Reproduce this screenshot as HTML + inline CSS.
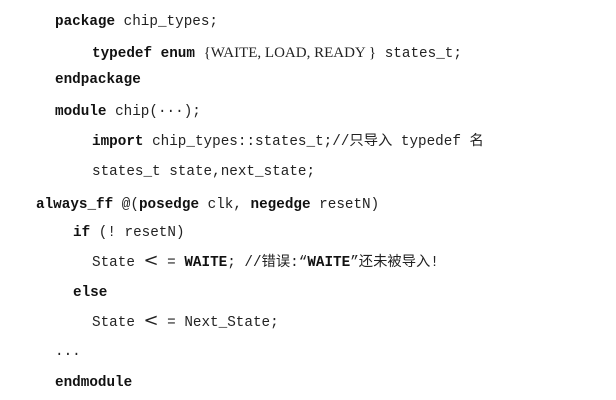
<!DOCTYPE html>
<html><head><meta charset="utf-8"><style>
body{margin:0;width:616px;height:400px;background:#fff;overflow:hidden;position:relative;font-family:"Liberation Mono","Noto Sans CJK SC",monospace;font-size:14.3px;color:#222;}
div{position:absolute;white-space:pre;line-height:18px;}
b{font-weight:bold;color:#111}
.s{font-family:"Liberation Serif","Noto Serif CJK SC",serif;font-size:15px}
.l{font-family:"DejaVu Sans",sans-serif;font-size:18px;line-height:14px}
</style></head><body>
<div style="left:55px;top:13px"><b>package</b> chip_types;</div>
<div style="left:92px;top:44px"><b>typedef enum</b> <span class="s">{WAITE, LOAD, READY }</span> states_t;</div>
<div style="left:55px;top:71px"><b>endpackage</b></div>
<div style="left:55px;top:103px"><b>module</b> chip(···);</div>
<div style="left:92px;top:133px"><b>import</b> chip_types::states_t;//只导入 typedef 名</div>
<div style="left:92px;top:163px">states_t state,next_state;</div>
<div style="left:36px;top:196px"><b>always_ff</b> @(<b>posedge</b> clk, <b>negedge</b> resetN)</div>
<div style="left:73px;top:224px"><b>if</b> (! resetN)</div>
<div style="left:92px;top:254px">State <span class="l">&lt;</span> = <b>WAITE</b>; //错误:“<b>WAITE</b>”还未被导入!</div>
<div style="left:73px;top:284px"><b>else</b></div>
<div style="left:92px;top:314px">State <span class="l">&lt;</span> = Next_State;</div>
<div style="left:55px;top:343px">...</div>
<div style="left:55px;top:374px"><b>endmodule</b></div>
</body></html>
